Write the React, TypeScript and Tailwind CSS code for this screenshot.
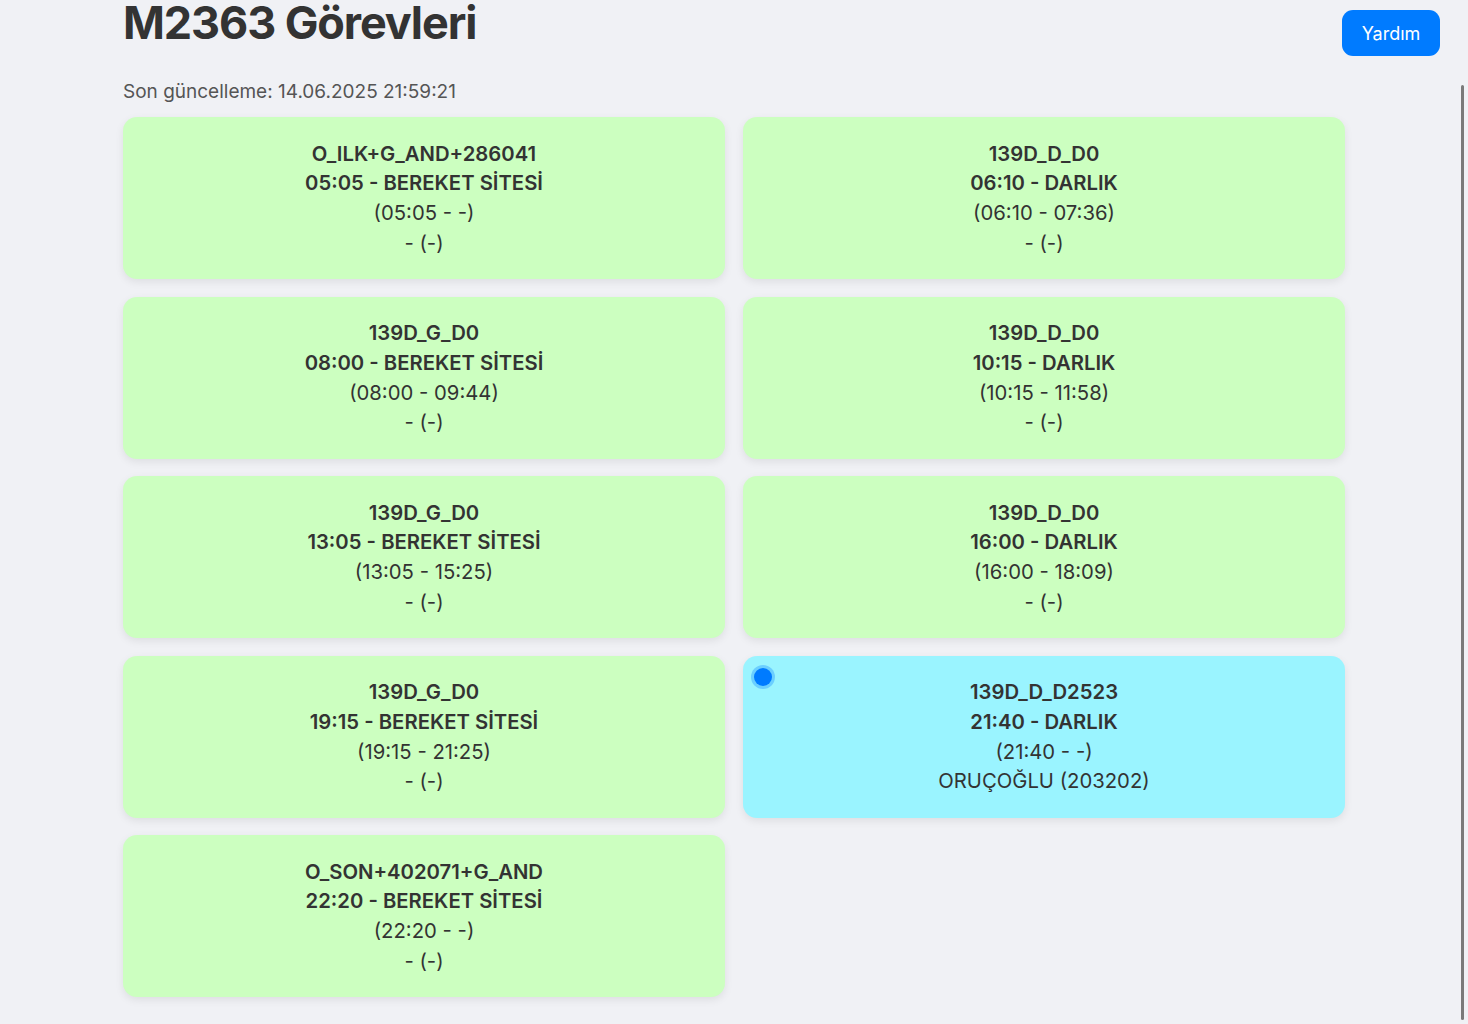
import React from "react";

type Task = { code: string; head: string; range: string; who: string; active?: boolean };

const tasks: Task[] = [
  { code: "O_ILK+G_AND+286041", head: "05:05 - BEREKET SİTESİ", range: "(05:05 - -)", who: "- (-)" },
  { code: "139D_D_D0", head: "06:10 - DARLIK", range: "(06:10 - 07:36)", who: "- (-)" },
  { code: "139D_G_D0", head: "08:00 - BEREKET SİTESİ", range: "(08:00 - 09:44)", who: "- (-)" },
  { code: "139D_D_D0", head: "10:15 - DARLIK", range: "(10:15 - 11:58)", who: "- (-)" },
  { code: "139D_G_D0", head: "13:05 - BEREKET SİTESİ", range: "(13:05 - 15:25)", who: "- (-)" },
  { code: "139D_D_D0", head: "16:00 - DARLIK", range: "(16:00 - 18:09)", who: "- (-)" },
  { code: "139D_G_D0", head: "19:15 - BEREKET SİTESİ", range: "(19:15 - 21:25)", who: "- (-)" },
  { code: "139D_D_D2523", head: "21:40 - DARLIK", range: "(21:40 - -)", who: "ORUÇOĞLU (203202)", active: true },
  { code: "O_SON+402071+G_AND", head: "22:20 - BEREKET SİTESİ", range: "(22:20 - -)", who: "- (-)" },
];

function Card({ t }: { t: Task }) {
  return (
    <div
      className={`relative h-[162px] rounded-[14px] flex flex-col items-center justify-center text-center text-[20.3px] leading-[29.7px] text-[#333333] shadow-[0_3px_8px_rgba(0,0,0,0.08)] ${
        t.active ? "bg-[#9af4ff]" : "bg-[#ccffc0]"
      }`}
    >
      {t.active && (
        <span className="absolute left-[11px] top-[12px] w-[18px] h-[18px] rounded-full bg-[#007bff] ring-[3px] ring-[#007bff]/30" />
      )}
      <div className="font-semibold">{t.code}</div>
      <div className="font-semibold">{t.head}</div>
      <div>{t.range}</div>
      <div>{t.who}</div>
    </div>
  );
}

export default function App() {
  return (
    <div className="min-h-[1024px] bg-[#f0f1f5] font-['Inter','Noto_Sans',sans-serif] overflow-hidden">
      <button className="fixed top-[10px] right-[28px] w-[98px] h-[46px] rounded-[11px] bg-[#007bff] text-white text-[18px]">
        Yardım
      </button>
      <div className="fixed right-[4px] top-[85px] w-[3px] h-[935px] rounded-full bg-[#7a7a7a]" />
      <div className="w-[1222px] mx-auto">
        <h1 className="text-[45px] leading-none font-bold text-[#333333] tracking-[-1.1px]">M2363 Görevleri</h1>
        <p className="mt-[35px] text-[19px] leading-[24px] text-[#555555]">Son güncelleme: 14.06.2025 21:59:21</p>
        <div className="mt-[13px] grid grid-cols-2 gap-x-[18px] gap-y-[17.5px] pb-[30px]">
          {tasks.map((t, i) => (
            <Card key={i} t={t} />
          ))}
        </div>
      </div>
    </div>
  );
}
